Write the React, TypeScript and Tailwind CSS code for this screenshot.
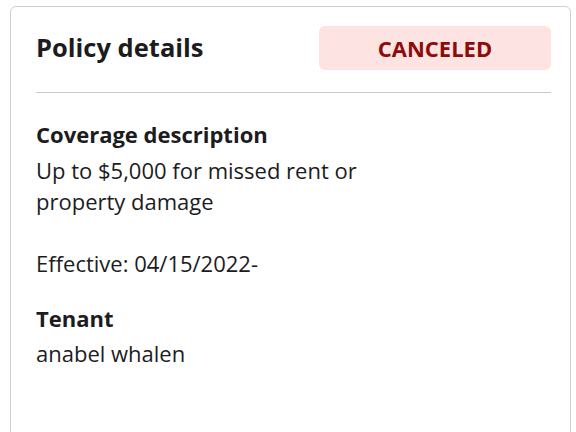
export default function App() {
  return (
    <div className="min-h-screen bg-white pt-[6px] pl-[10px]" style={{ fontFamily: '"Open Sans", sans-serif' }}>
      <div className="w-[561px] h-[460px] rounded-md border border-[#cfcfcf] pl-[25px] pr-[19px] text-[#1c1c1e]">
        <div className="flex items-center justify-between pt-[19px]">
          <h1 className="text-[25.5px] font-bold leading-none">Policy details</h1>
          <div className="flex h-[44px] w-[232px] items-center justify-center rounded-md bg-[#fde3e2] text-[22px] font-bold text-[#8c0c0c]">
            CANCELED
          </div>
        </div>
        <div className="mt-[22px] h-px bg-[#c8c8c8]" />
        <div className="pt-[26px] text-[22px] leading-[31px]">
          <div className="font-bold">Coverage description</div>
          <div className="mt-[5px] w-[340px]">Up to $5,000 for missed rent or property damage</div>
          <div className="mt-[31px]">Effective: 04/15/2022-</div>
          <div className="mt-[24px] font-bold">Tenant</div>
          <div className="mt-[4px]">anabel whalen</div>
        </div>
      </div>
    </div>
  );
}
